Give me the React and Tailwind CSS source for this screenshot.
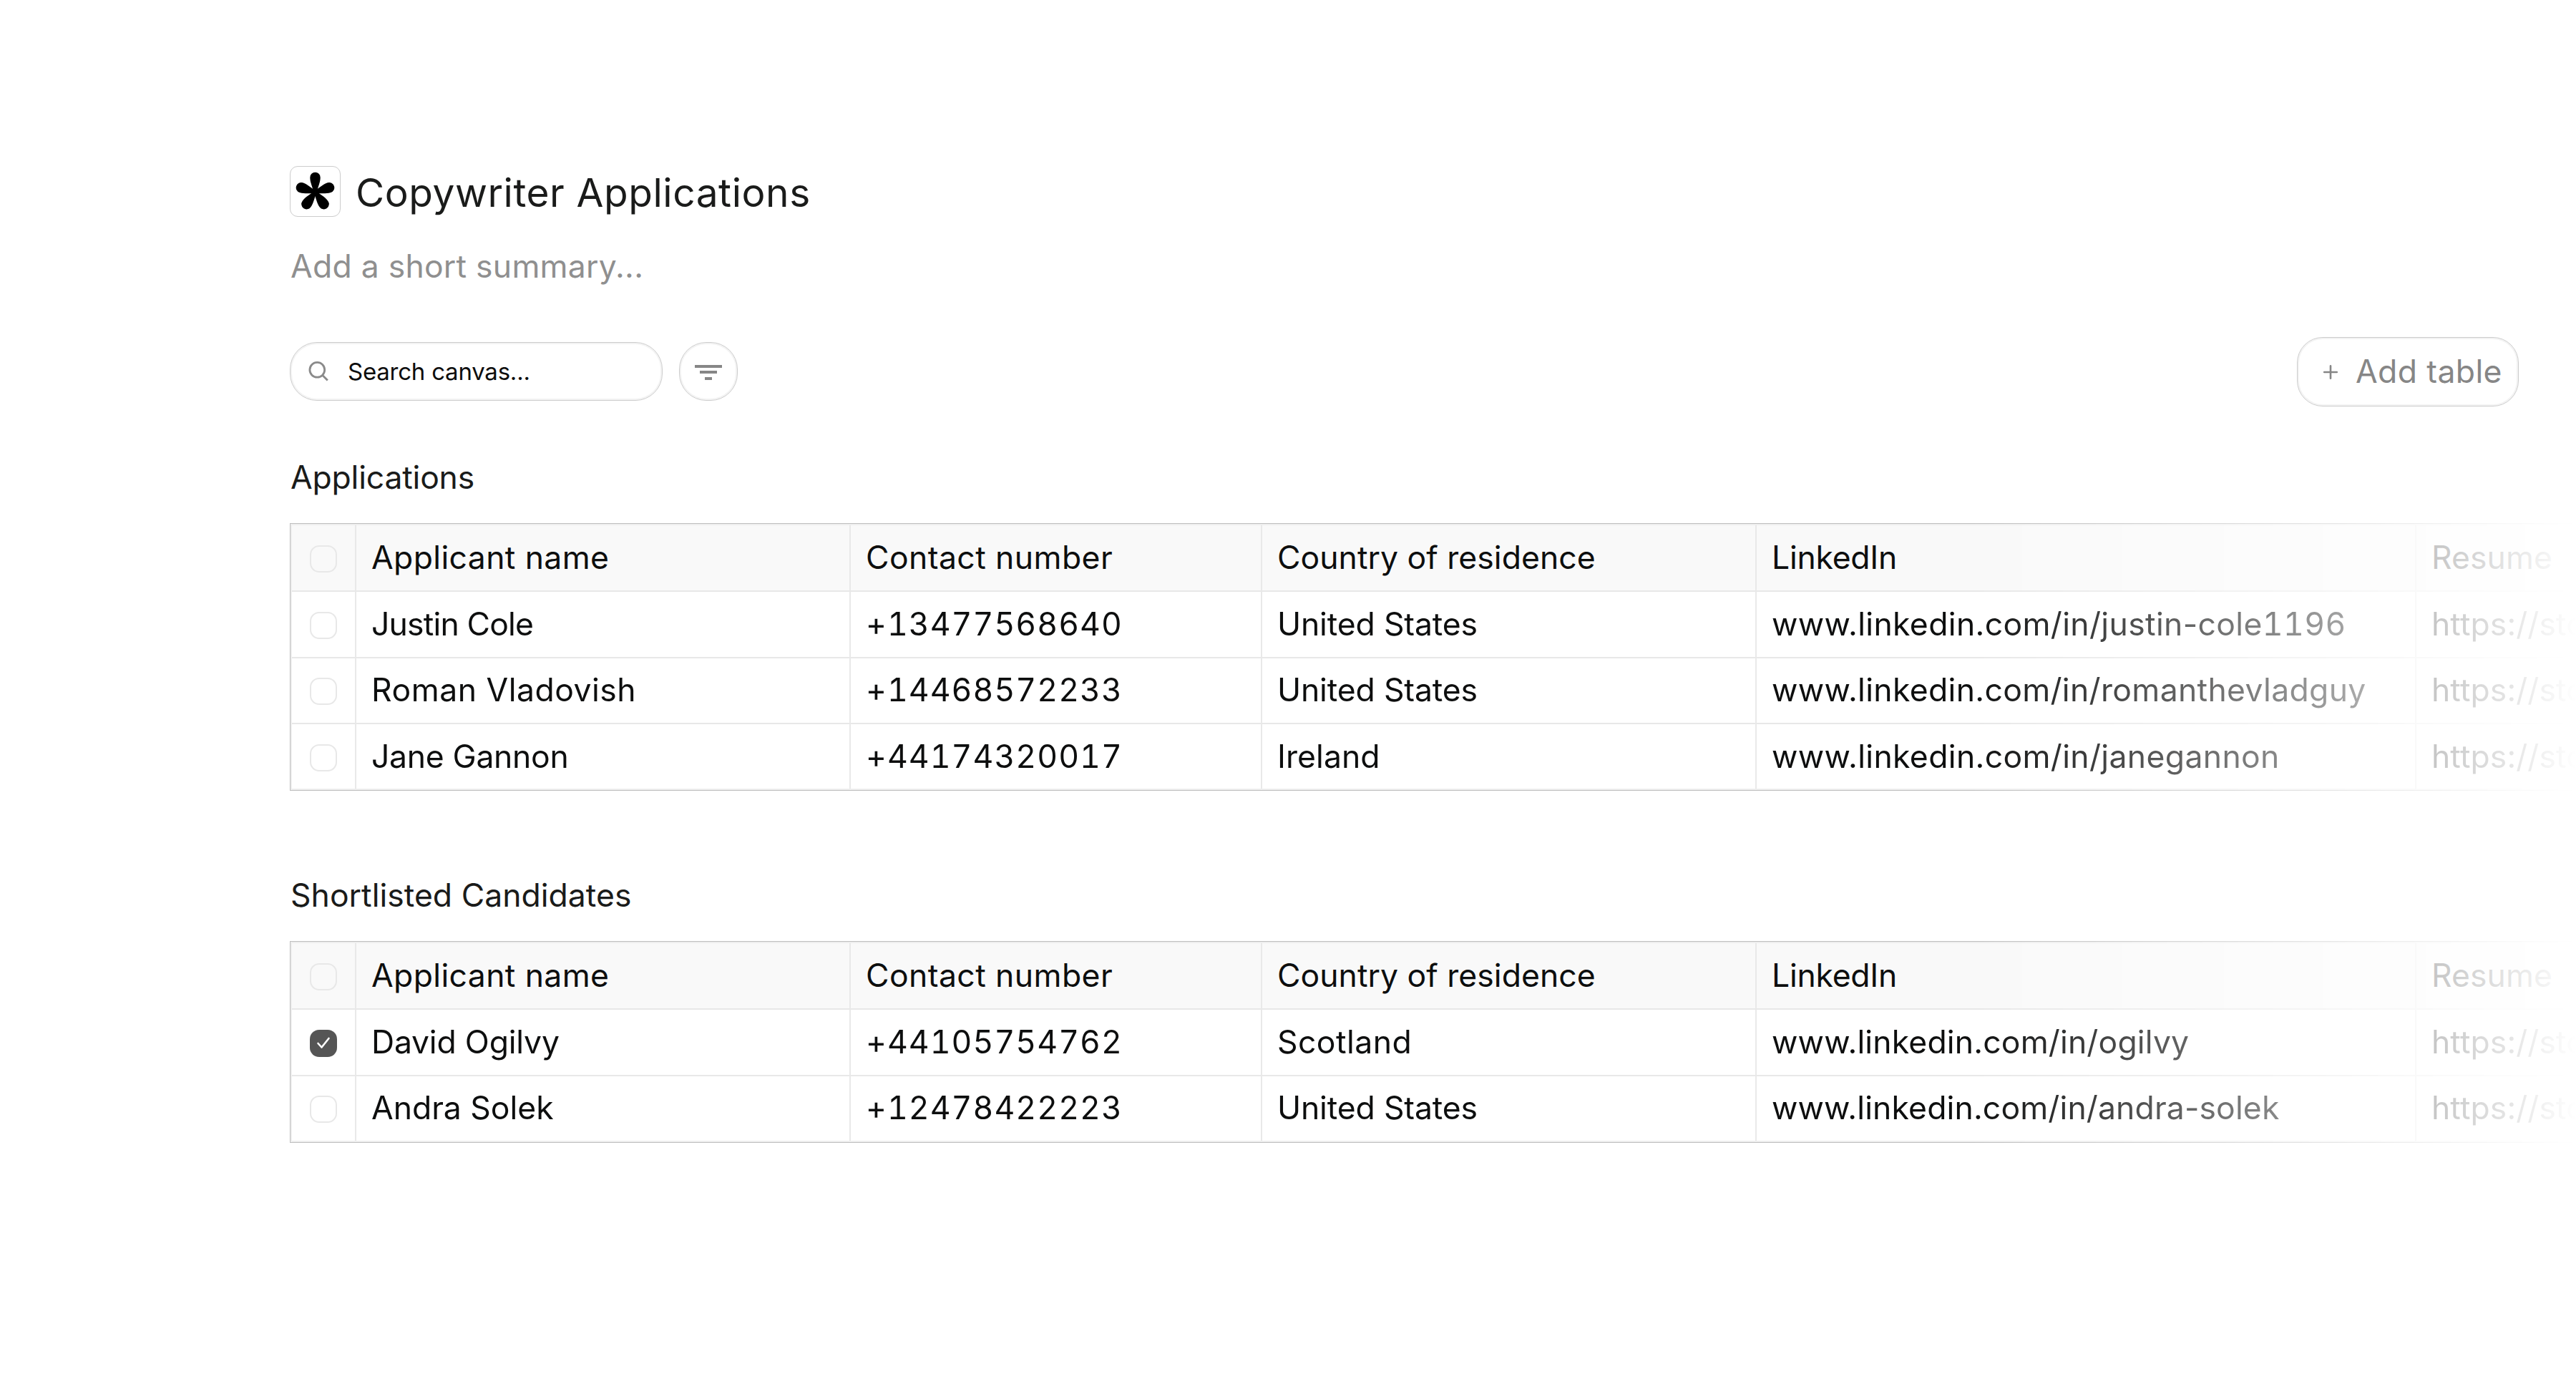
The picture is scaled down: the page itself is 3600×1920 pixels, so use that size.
import React, { useState } from 'react';

const columns = [
    { key: 'name', label: 'Applicant name', width: 'w-[691px]', tracking: 'tracking-[0.37px]' },
    { key: 'phone', label: 'Contact number', width: 'w-[575px]', tracking: 'tracking-[0.42px]' },
    { key: 'country', label: 'Country of residence', width: 'w-[691px]', tracking: 'tracking-[0.03px]' },
    { key: 'linkedin', label: 'LinkedIn', width: 'w-[922px]', tracking: 'tracking-[-0.25px]' },
    { key: 'resume', label: 'Resume', width: 'w-[223px]', tracking: 'tracking-[0.06px]' },
];

const applications = [
    {
        id: 1,
        name: ['Justin Cole', 'tracking-[-0.83px]'],
        phone: '+13477568640',
        country: ['United States', 'tracking-[-0.15px]'],
        linkedin: ['www.linkedin.com/in/justin-cole', 'tracking-[0.35px]', '1196'],
    },
    {
        id: 2,
        name: ['Roman Vladovish', 'tracking-[0.5px]'],
        phone: '+14468572233',
        country: ['United States', 'tracking-[-0.15px]'],
        linkedin: ['www.linkedin.com/in/romanthevladguy', 'tracking-[0.33px]'],
    },
    {
        id: 3,
        name: ['Jane Gannon', 'tracking-[-0.32px]'],
        phone: '+44174320017',
        country: ['Ireland', 'tracking-[0.05px]'],
        linkedin: ['www.linkedin.com/in/janegannon', 'tracking-[0.35px]'],
    },
];

const shortlisted = [
    {
        id: 4,
        name: ['David Ogilvy', 'tracking-[-0.2px]'],
        phone: '+44105754762',
        country: ['Scotland', 'tracking-[0.45px]'],
        linkedin: ['www.linkedin.com/in/ogilvy', 'tracking-[0.16px]'],
    },
    {
        id: 5,
        name: ['Andra Solek', 'tracking-[-0.03px]'],
        phone: '+12478422223',
        country: ['United States', 'tracking-[-0.15px]'],
        linkedin: ['www.linkedin.com/in/andra-solek', 'tracking-[0.13px]'],
    },
];

const Checkbox = ({ checked, onClick }) => (
    <button
        type="button"
        onClick={onClick}
        className={`mt-[3px] flex size-[38px] items-center justify-center rounded-[13px] ${
            checked ? 'bg-[#555555]' : 'border-2 border-[#e8e8e8]'
        }`}
    >
        {checked && (
            <svg width="22" height="20" viewBox="0 0 22 20" fill="none">
                <path
                    d="M3.5 10 L8.5 15.5 L18.5 3"
                    stroke="#ffffff"
                    strokeWidth="2.6"
                    strokeLinecap="round"
                    strokeLinejoin="round"
                />
            </svg>
        )}
    </button>
);

const Cell = ({ width, tracking, last, children }) => (
    <div
        className={`flex shrink-0 items-center overflow-hidden pl-[21px] whitespace-nowrap ${width} ${tracking} ${
            last ? '' : 'border-r-2 border-[#e9e9e9]'
        }`}
    >
        {children}
    </div>
);

const Table = ({ title, rows, selected, onToggle, className }) => (
    <section className={className}>
        <h2 className="h-[60px] pl-px text-[44.5px] leading-[60px] text-[#1a1b1a]">{title}</h2>
        <div className="mt-[34px] overflow-hidden border-y border-l border-[#bebebe] [mask-image:linear-gradient(to_right,black_2350px,transparent_3195px)]">
            <div className="border-y-2 border-l-2 border-[#eeeeee] text-[44.5px] text-[#0d0e0e]">
                <div className="flex h-[93px] border-b-2 border-[#e8e8e8] bg-[#f9f9f9]">
                    <div className="flex w-[90px] shrink-0 items-center justify-center border-r-2 border-[#e9e9e9]">
                        <Checkbox />
                    </div>
                    {columns.map((col) => (
                        <Cell key={col.key} width={col.width} tracking={col.tracking} last={col.key === 'resume'}>
                            {col.label}
                        </Cell>
                    ))}
                </div>
                {rows.map((row) => (
                    <div
                        key={row.id}
                        className="flex h-[92.5px] border-b-2 border-[#e8e8e8] last:h-[90px] last:border-b-0"
                    >
                        <div className="flex w-[90px] shrink-0 items-center justify-center border-r-2 border-[#e9e9e9]">
                            <Checkbox checked={selected.includes(row.id)} onClick={() => onToggle(row.id)} />
                        </div>
                        <Cell width="w-[691px]" tracking={row.name[1]}>{row.name[0]}</Cell>
                        <Cell width="w-[575px]" tracking="tracking-[1.05px] tabular-nums">{row.phone}</Cell>
                        <Cell width="w-[691px]" tracking={row.country[1]}>{row.country[0]}</Cell>
                        <Cell width="w-[922px]" tracking={row.linkedin[1]}>
                            {row.linkedin[0]}
                            {row.linkedin[2] && <span className="tracking-[0.4px] tabular-nums">{row.linkedin[2]}</span>}
                        </Cell>
                        <Cell width="w-[223px]" tracking="tracking-[0.06px]" last>https://sto</Cell>
                    </div>
                ))}
            </div>
        </div>
    </section>
);

const Logo = () => (
    <div className="flex size-[71px] items-center justify-center rounded-[11px] border border-[#cccccc]">
        <svg width="69" height="69" viewBox="-34.5 -35.5 69 69">
            {[0, 72, 144, 216, 288].map((angle) => (
                <path
                    key={angle}
                    transform={`rotate(${angle})`}
                    d="M-2.4 0 C-3.4 -7 -7.2 -13 -7.2 -20.6 A7.2 7.2 0 0 1 7.2 -20.6 C7.2 -13 3.4 -7 2.4 0 Z"
                    fill="#000000"
                />
            ))}
        </svg>
    </div>
);

const App = () => {
    const [selected, setSelected] = useState([4]);

    const toggle = (id) => {
        setSelected(selected.includes(id) ? selected.filter((x) => x !== id) : [...selected, id]);
    };

    return (
        <main className="h-[1920px] w-[3600px] overflow-hidden bg-white pt-[232px] pl-[405px] font-['Inter',sans-serif]">
            <header>
                <div className="flex h-[71px] items-center">
                    <Logo />
                    <h1 className="mt-1 ml-[21px] text-[55px] leading-none tracking-[0.56px] text-[#1a1b1a]">
                        Copywriter Applications
                    </h1>
                </div>
                <p className="mt-[39px] h-[60px] pl-px text-[44.5px] leading-[60px] tracking-[0.24px] text-[#8f8f8f]">
                    Add a short summary...
                </p>
            </header>

            <div className="mt-[69px] flex h-[97px] items-center pr-20">
                <div className="-mt-px flex h-[82px] w-[521px] items-center rounded-[38px] border border-[#cccccc] pl-[25px] shadow-[inset_0_0_0_2px_#f3f3f3]">
                    <svg width="30" height="30" viewBox="0 0 30 30" fill="none" stroke="#8a8a8a" strokeWidth="2.8">
                        <circle cx="12.3" cy="12.8" r="10.4" />
                        <path d="M19.8 20.5 L26.8 27.5" />
                    </svg>
                    <span className="ml-[25px] text-[33px] leading-none tracking-[-0.23px] text-[#0d0d0d]">
                        Search canvas...
                    </span>
                </div>
                <button
                    type="button"
                    className="-mt-px ml-[23px] flex size-[82px] flex-col items-center justify-center gap-[4.5px] rounded-[38px] border border-[#cccccc] pt-[2px] shadow-[inset_0_0_0_2px_#f3f3f3]"
                >
                    <span className="h-1 w-[38px] bg-[#868686]" />
                    <span className="h-1 w-6 bg-[#868686]" />
                    <span className="h-1 w-[10px] bg-[#868686]" />
                </button>
                <button
                    type="button"
                    className="ml-auto flex h-[97px] w-[310px] items-center rounded-[36px] border border-[#cccccc] pl-[35px] text-[#868686] shadow-[inset_0_0_0_2px_#f3f3f3]"
                >
                    <svg width="22" height="22" viewBox="0 0 22 22" stroke="#868686" strokeWidth="2.6" strokeLinecap="round">
                        <path d="M11 2.2 V19.8 M2.2 11 H19.8" />
                    </svg>
                    <span className="ml-6 text-[44.5px] leading-none tracking-[0.39px] whitespace-nowrap">Add table</span>
                </button>
            </div>

            <Table
                title={<span className="tracking-[-0.2px]">Applications</span>}
                rows={applications}
                selected={selected}
                onToggle={toggle}
                className="mt-[69px]"
            />
            <Table
                title={<span className="tracking-[0.02px]">Shortlisted Candidates</span>}
                rows={shortlisted}
                selected={selected}
                onToggle={toggle}
                className="mt-[116px]"
            />
        </main>
    );
};

export default App;
